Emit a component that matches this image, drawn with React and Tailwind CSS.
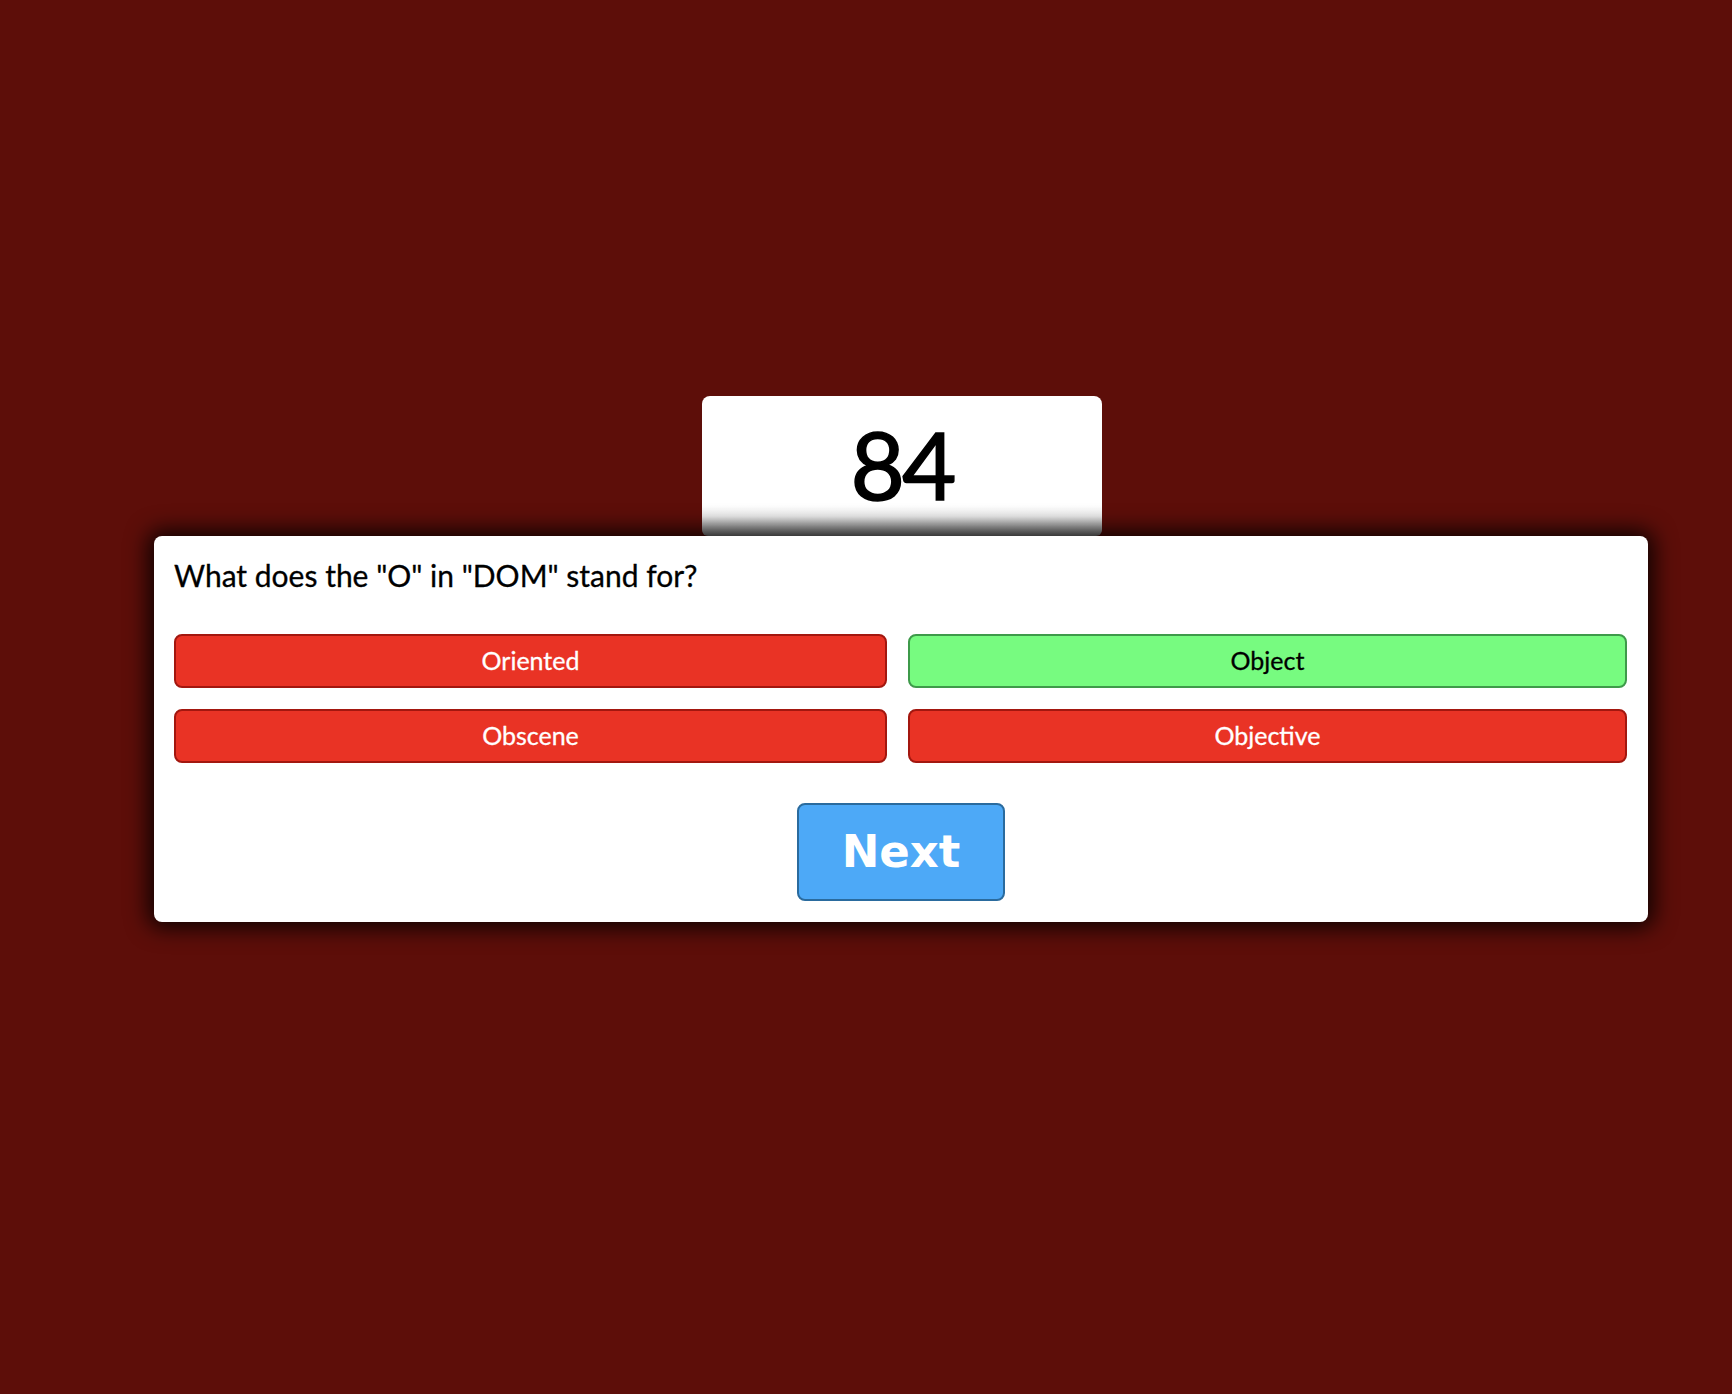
const answers = [
  { label: 'Oriented', correct: false },
  { label: 'Object', correct: true },
  { label: 'Obscene', correct: false },
  { label: 'Objective', correct: false },
]

const App = () => {
  return (
    <div className="min-h-[1394px] w-full bg-[#5d0e09] pt-[396px] font-['Lato','Noto_Sans',sans-serif]">
      <div className="ml-[702px] flex h-[140px] w-[400px] items-center justify-center rounded-t-lg rounded-b-md bg-[linear-gradient(to_bottom,#ffffff_78%,#f0f0f0_86%,#929292_100%)]">
        <span className="-mt-1 text-[94px] leading-none tracking-[-3px] text-black [-webkit-text-stroke:1.5px_black]">84</span>
      </div>
      <div className="ml-[154px] w-[1494px] rounded-lg bg-white px-5 pt-[22px] pb-[21px] shadow-[0_0_22px_6px_rgba(0,0,0,0.85)]">
        <h2 className="text-[30px] leading-[34px] text-black [-webkit-text-stroke:0.3px_black]">What does the "O" in "DOM" stand for?</h2>
        <div className="mt-[42px] grid grid-cols-[713px_719px] gap-[21px]">
          {answers.map((a) => (
            <button
              key={a.label}
              className={
                a.correct
                  ? 'h-[54px] rounded-lg border-2 border-[#3e9a4a] bg-[#77fb80] text-[25px] text-black [-webkit-text-stroke:0.3px_black]'
                  : 'h-[54px] rounded-lg border-2 border-[#a3170f] bg-[#e93325] text-[25px] text-white [-webkit-text-stroke:0.3px_white]'
              }
            >
              {a.label}
            </button>
          ))}
        </div>
        <div className="mt-[40px] flex justify-center">
          <button className="h-[98px] w-[208px] rounded-lg border-2 border-[#2a6b9e] bg-[#4da9f7] font-['DejaVu_Sans',sans-serif] text-[45px] font-bold text-white">
            Next
          </button>
        </div>
      </div>
    </div>
  )
}

export default App
